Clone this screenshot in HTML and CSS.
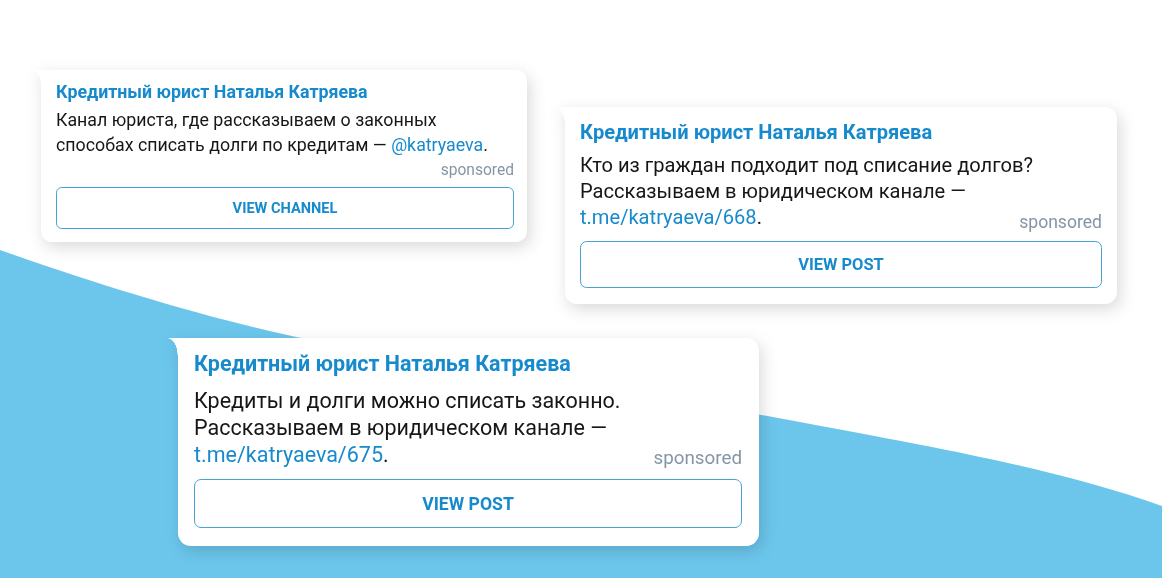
FILE: index.html
```html
<!DOCTYPE html>
<html lang="ru">
<head>
  <meta charset="UTF-8">
  <meta name="viewport" content="width=device-width, initial-scale=1.0">
  <title>Кредитный юрист Наталья Катряева - sponsored</title>
  <link rel="stylesheet" href="styles.css">
</head>
<body>
  <div class="stage">
    <svg class="wave" viewBox="0 0 1162 578" preserveAspectRatio="none" aria-hidden="true">
      <path d="M0 250 C 120 292 220 322 330 344 C 480 372 640 392 800 422 C 950 450 1060 470 1162 506 L1162 578 L0 578 Z" fill="#6cc6ec"/>
    </svg>

    <div class="board">
      <div class="row">
        <div class="ad ad--sm">
          <div class="ad-title">Кредитный юрист Наталья Катряева</div>
          <p class="ad-text">Канал юриста, где рассказываем о законных<br>способах списать долги по кредитам — <a href="#">@katryaeva</a>.<span class="sponsored">sponsored</span></p>
          <a class="ad-btn" href="#">View channel</a>
        </div>

        <div class="ad ad--md">
          <div class="ad-title">Кредитный юрист Наталья Катряева</div>
          <p class="ad-text">Кто из граждан подходит под списание долгов?<br>Рассказываем в юридическом канале —<br><a href="#">t.me/katryaeva/668</a>.<span class="sponsored">sponsored</span></p>
          <a class="ad-btn" href="#">View post</a>
        </div>
      </div>

      <div class="ad ad--lg">
        <div class="ad-title">Кредитный юрист Наталья Катряева</div>
        <p class="ad-text">Кредиты и долги можно списать законно.<br>Рассказываем в юридическом канале —<br><a href="#">t.me/katryaeva/675</a>.<span class="sponsored">sponsored</span></p>
        <a class="ad-btn" href="#">View post</a>
      </div>
    </div>
  </div>
</body>
</html>
```

FILE: styles.css
```css
body {
  margin: 0;
  padding: 0;
  background: #fff;
  font-family: Roboto, 'Liberation Sans', sans-serif;
  color: #161616;
}
.stage {
  position: relative;
  width: 1162px;
  height: 578px;
  overflow: hidden;
}
.wave {
  position: absolute;
  left: 0;
  top: 0;
  width: 100%;
  height: 100%;
}
.board {
  position: relative;
  padding-top: 70px;
}
.row {
  display: flex;
  align-items: flex-start;
}

/* message bubble */
.ad {
  position: relative;
  box-sizing: border-box;
  background: #fff;
  border-radius: 0 0.6em 0.6em 0.6em;
  filter: drop-shadow(3px 5px 8px rgba(0, 0, 0, 0.15));
}
.ad::before {
  content: '';
  position: absolute;
  left: -0.5em;
  top: 0;
  width: 0.5em;
  height: 0.8em;
  background: radial-gradient(0.5em 0.8em at 0 100%, transparent 96%, #fff 100%);
}
.ad-title {
  color: #168acd;
  font-weight: 700;
}
.ad-text {
  display: flow-root;
  margin: 0;
}
.ad-text a {
  color: #168acd;
  text-decoration: none;
}
.sponsored {
  position: relative;
  float: right;
  color: #8496a6;
  font-size: 0.875em;
}
.ad-btn {
  display: flex;
  align-items: center;
  justify-content: center;
  box-sizing: border-box;
  border: 1.5px solid #47a3d6;
  border-radius: 0.4em;
  color: #168acd;
  font-size: 0.82em;
  font-weight: 700;
  text-decoration: none;
  text-transform: uppercase;
}

/* sizes */
.ad--sm {
  width: 486px;
  margin-left: 41px;
  padding: 12px 13px 13px 15px;
  font-size: 17.8px;
}
.ad--sm .ad-title { line-height: 20px; }
.ad--sm .ad-text { margin-top: 5px; line-height: 25px; }
.ad--sm .sponsored { top: 1px; }
.ad--sm .ad-btn { margin-top: 5px; height: 42px; }

.ad--md {
  width: 552px;
  margin-left: 38px;
  margin-top: 37px;
  padding: 14px 15px 16px 15px;
  font-size: 20.1px;
}
.ad--md .ad-title { line-height: 22px; }
.ad--md .ad-text { margin-top: 9px; line-height: 26px; }
.ad--md .sponsored { top: 5px; }
.ad--md .ad-btn { margin-top: 11px; height: 47px; }

.ad--lg {
  width: 581px;
  margin-left: 178px;
  margin-top: 34px;
  padding: 14px 17px 18px 16px;
  font-size: 21.5px;
}
.ad--lg .ad-title { line-height: 24px; }
.ad--lg .ad-text { margin-top: 11px; line-height: 27px; }
.ad--lg .sponsored { top: 4px; }
.ad--lg .ad-btn { margin-top: 11px; height: 49px; }
```
